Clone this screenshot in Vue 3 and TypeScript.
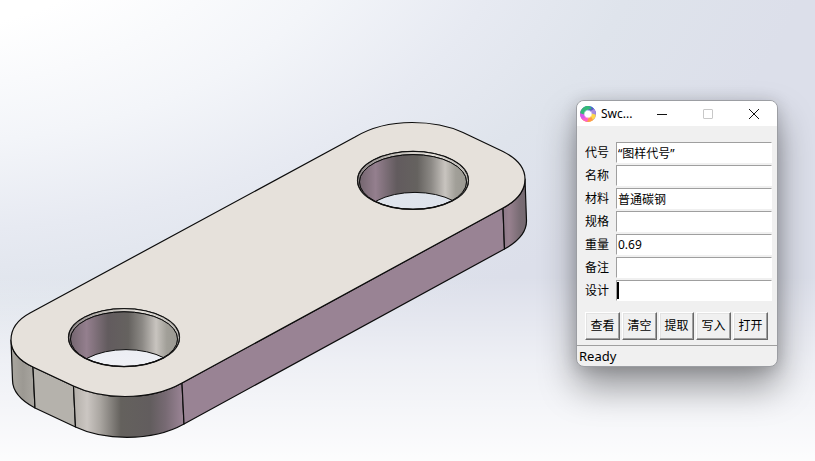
<script setup lang="ts">
import { reactive } from 'vue'

interface Field {
  id: string
  label: string
  value: string
}

const fields = reactive<Field[]>([
  { id: 'code', label: '代号', value: '“图样代号”' },
  { id: 'name', label: '名称', value: '' },
  { id: 'material', label: '材料', value: '普通碳钢' },
  { id: 'spec', label: '规格', value: '' },
  { id: 'weight', label: '重量', value: '0.69' },
  { id: 'remark', label: '备注', value: '' },
  { id: 'design', label: '设计', value: '' },
])

const actions: string[] = ['查看', '清空', '提取', '写入', '打开']

const holes = [
  { id: 'near', x: 124, y: 337.6 },
  { id: 'far', x: 413, y: 180.4 },
]

const petals: { color: string; angle: number }[] = [
  { color: '#2f9be8', angle: 0 },
  { color: '#5a55c8', angle: 45 },
  { color: '#a78be0', angle: 90 },
  { color: '#ffd84a', angle: 135 },
  { color: '#ff9a4a', angle: 180 },
  { color: '#ff5fd0', angle: 225 },
  { color: '#d45bea', angle: 270 },
  { color: '#35b878', angle: 315 },
]
</script>

<template>
  <main class="viewport">
    <svg class="model" viewBox="0 0 815 461" preserveAspectRatio="xMinYMin meet" aria-hidden="true">
      <defs>
        <linearGradient id="front" gradientUnits="userSpaceOnUse" x1="74" y1="0" x2="183" y2="0">
          <stop offset="0" stop-color="#b4b0aa" />
          <stop offset="0.12" stop-color="#cbc6c2" />
          <stop offset="0.24" stop-color="#aaa6a1" />
          <stop offset="0.43" stop-color="#64615d" />
          <stop offset="0.7" stop-color="#625d5e" />
          <stop offset="0.84" stop-color="#776a73" />
          <stop offset="1" stop-color="#9a8495" />
        </linearGradient>
        <linearGradient id="left" gradientUnits="userSpaceOnUse" x1="11" y1="0" x2="35" y2="0">
          <stop offset="0" stop-color="#aaa7a0" />
          <stop offset="0.5" stop-color="#9c9993" />
          <stop offset="1" stop-color="#aaa7a1" />
        </linearGradient>
        <linearGradient id="right" gradientUnits="userSpaceOnUse" x1="503" y1="0" x2="527" y2="0">
          <stop offset="0" stop-color="#8d7888" />
          <stop offset="0.25" stop-color="#98818f" />
          <stop offset="0.7" stop-color="#796c74" />
          <stop offset="1" stop-color="#746970" />
        </linearGradient>
        <linearGradient id="bore">
          <stop offset="0" stop-color="#74666f" />
          <stop offset="0.15" stop-color="#947f8e" />
          <stop offset="0.35" stop-color="#625b5e" />
          <stop offset="0.54" stop-color="#65625f" />
          <stop offset="0.67" stop-color="#8c8985" />
          <stop offset="0.8" stop-color="#c8c4bf" />
          <stop offset="0.9" stop-color="#a19f98" />
          <stop offset="1" stop-color="#9b9992" />
        </linearGradient>
        <linearGradient id="chamfer">
          <stop offset="0" stop-color="#8a8384" />
          <stop offset="0.3" stop-color="#bcb8b3" />
          <stop offset="0.65" stop-color="#e4e0da" />
          <stop offset="1" stop-color="#b9b6b1" />
        </linearGradient>
        <clipPath id="bore-clip"><ellipse cx="0" cy="1.5" rx="53.5" ry="27.3" /></clipPath>
        <mask id="bore-mask" maskUnits="userSpaceOnUse" x="-60" y="-40" width="120" height="80">
          <rect x="-60" y="-40" width="120" height="80" fill="#fff" />
          <ellipse cx="2" cy="40.5" rx="54" ry="28.5" fill="#000" />
        </mask>
      </defs>

      <g class="edge">
        <path fill="url(#left)" d="M11 340C11 350 18 360 33 367L35 408C20 400 12.500 391 12.500 380Z" />
        <path fill="#b5b2ac" d="M33 367L73.500 386L75.500 427L35 408Z" />
        <path fill="url(#front)" d="M73.500 386C87 392.500 104 396.500 125 396.500C147 396.500 166 392 182 383L184 424C168 433 149 437.300 127 437.300C106 437.300 89 433.500 75.500 427Z" />
        <path fill="#998394" d="M182 383L503 208L504.500 249L184 424Z" />
        <path fill="url(#right)" d="M503 208C518 200 525 190 525 179L526.500 221C526.500 232 519 241 504.500 249Z" />
        <path
          fill="#e6e1db"
          fill-rule="evenodd"
          d="M30 313L355 137C370 128 389 122.500 412 122.500C433 122.500 450 126.500 463 132.500L503 151.500C518 159 525 169 525 179C525 190 518 200 503 208L182 383C166 392 147 396.500 125 396.500C104 396.500 87 392.500 73.500 386L33 367C18 360 11 350 11 340C11 330 17 320 30 313ZM68.500 337.600a55.500 29 0 1 0 111 0a55.500 29 0 1 0 -111 0ZM357.500 180.400a55.500 29 0 1 0 111 0a55.500 29 0 1 0 -111 0Z"
        />
      </g>

      <g v-for="hole in holes" :key="hole.id" class="edge rim" :transform="`translate(${hole.x} ${hole.y})`">
        <path
          fill="url(#chamfer)"
          fill-rule="evenodd"
          d="M-55.500 0a55.500 29 0 1 0 111 0a55.500 29 0 1 0 -111 0ZM-53.500 1.500a53.500 27.300 0 1 0 107 0a53.500 27.300 0 1 0 -107 0Z"
        />
        <g mask="url(#bore-mask)">
          <ellipse cx="0" cy="1.5" rx="53.5" ry="27.3" fill="url(#bore)" />
        </g>
        <g clip-path="url(#bore-clip)">
          <ellipse cx="2" cy="40.5" rx="54" ry="28.5" fill="none" />
        </g>
      </g>
    </svg>

    <section class="window" aria-label="Swc...">
      <header class="titlebar">
        <svg class="logo" viewBox="0 0 16 16" aria-hidden="true">
          <path
            v-for="petal in petals"
            :key="petal.angle"
            :fill="petal.color"
            :transform="`rotate(${petal.angle} 8 8)`"
            d="M3 2C5.500 -0.600 11 -0.700 13.800 2.400C15 3.800 15.100 6 13.800 7.400C12 4.400 8.500 3.600 5 5.600Z"
          />
          <circle cx="8" cy="8" r="3.600" fill="none" stroke="#fff" stroke-width="1.200" opacity="0.5" />
          <circle cx="8" cy="8" r="2.900" fill="#fff" />
        </svg>
        <h1 class="title">Swc...</h1>
        <div class="controls">
          <button class="control" type="button" aria-label="最小化">
            <svg viewBox="0 0 12 12"><path d="M1 6.500H11" /></svg>
          </button>
          <button class="control" type="button" aria-label="最大化" disabled>
            <svg viewBox="0 0 12 12"><rect x="1.5" y="1.5" width="9" height="9" rx="0.5" /></svg>
          </button>
          <button class="control" type="button" aria-label="关闭">
            <svg viewBox="0 0 12 12"><path d="M1 1L11 11M11 1L1 11" /></svg>
          </button>
        </div>
      </header>

      <form class="form" @submit.prevent>
        <div v-for="field in fields" :key="field.id" class="row">
          <label :for="field.id">{{ field.label }}</label>
          <input :id="field.id" v-model="field.value" type="text" :class="{ active: field.id === 'design' }" />
        </div>
        <div class="actions">
          <button v-for="action in actions" :key="action" class="action" type="button">{{ action }}</button>
        </div>
      </form>

      <footer class="status">Ready</footer>
    </section>
  </main>
</template>

<style>
body {
  margin: 0;
}
</style>

<style scoped>
.viewport {
  position: relative;
  min-height: 100vh;
  overflow: hidden;
  background:
    linear-gradient(180deg, rgba(255, 255, 255, 0) 60%, rgba(255, 255, 255, 0.5) 78%, rgba(255, 255, 255, 0.93) 100%),
    radial-gradient(150% 145% at -12% -22%, #fff 20%, #f3f5f9 37%, #e7eaf2 50%, #dfe4ec 61%, #dcdfea 75%);
  font-family: 'Noto Sans', 'Noto Sans CJK SC', sans-serif;
  font-size: 12px;
  color: #000;
}

.model {
  position: absolute;
  inset: 0;
  width: 100%;
  height: 100%;
}

.edge {
  stroke: #0c0c0c;
  stroke-width: 1.2;
  stroke-linejoin: round;
}

.rim {
  stroke-width: 1;
}

.window {
  position: absolute;
  top: 100px;
  right: 37px;
  box-sizing: border-box;
  width: 202px;
  overflow: hidden;
  border: 1px solid #9c9ea3;
  border-radius: 8px;
  background: #f0f0f0;
  box-shadow:
    0 20px 36px rgba(0, 0, 0, 0.38),
    0 2px 16px rgba(0, 0, 0, 0.16);
}

.titlebar {
  display: flex;
  align-items: center;
  height: 25px;
  padding-left: 3px;
  background: #fff;
}

.logo {
  width: 16px;
  height: 16px;
}

.title {
  flex: 1;
  margin: 0 0 0 5px;
  font-size: 12px;
  font-weight: 400;
  line-height: 16px;
}

.controls {
  display: flex;
}

.control {
  display: grid;
  place-items: center;
  width: 46px;
  height: 25px;
  padding: 0;
  border: 0;
  background: none;
}

.control svg {
  width: 12px;
  height: 12px;
  fill: none;
  stroke: #111;
  stroke-width: 1;
}

.control:disabled svg {
  stroke: #c8c8c8;
}

.form {
  display: flex;
  flex-direction: column;
  gap: 2px;
  padding: 16px 5px 5px 8px;
}

.row {
  display: flex;
  align-items: center;
  gap: 7px;
}

.row label {
  width: 24px;
  line-height: 21px;
  white-space: nowrap;
}

.row input {
  flex: 1;
  box-sizing: border-box;
  min-width: 0;
  height: 21px;
  padding: 0 1px;
  border: 1px solid #fff;
  border-top-color: #9f9f9f;
  border-left-color: #9f9f9f;
  border-radius: 0;
  outline: 0;
  background: #fff;
  color: #000;
  font: inherit;
}

.row input.active {
  background: linear-gradient(#000, #000) 0 1px / 2px 17px no-repeat #fff;
}

.actions {
  display: flex;
  gap: 2px;
  margin-top: 9px;
}

.action {
  box-sizing: border-box;
  width: 35px;
  height: 28px;
  padding: 0;
  border: 1px solid;
  border-color: #fff #696969 #696969 #fff;
  border-radius: 0;
  background: #f0f0f0;
  box-shadow:
    inset -1px -1px #a0a0a0,
    inset 1px 1px #e3e3e3;
  color: #000;
  font: inherit;
  line-height: 24px;
}

.status {
  padding: 0 2px;
  border-top: 1px solid #9f9f9f;
  font-size: 13px;
  line-height: 20px;
}
</style>
